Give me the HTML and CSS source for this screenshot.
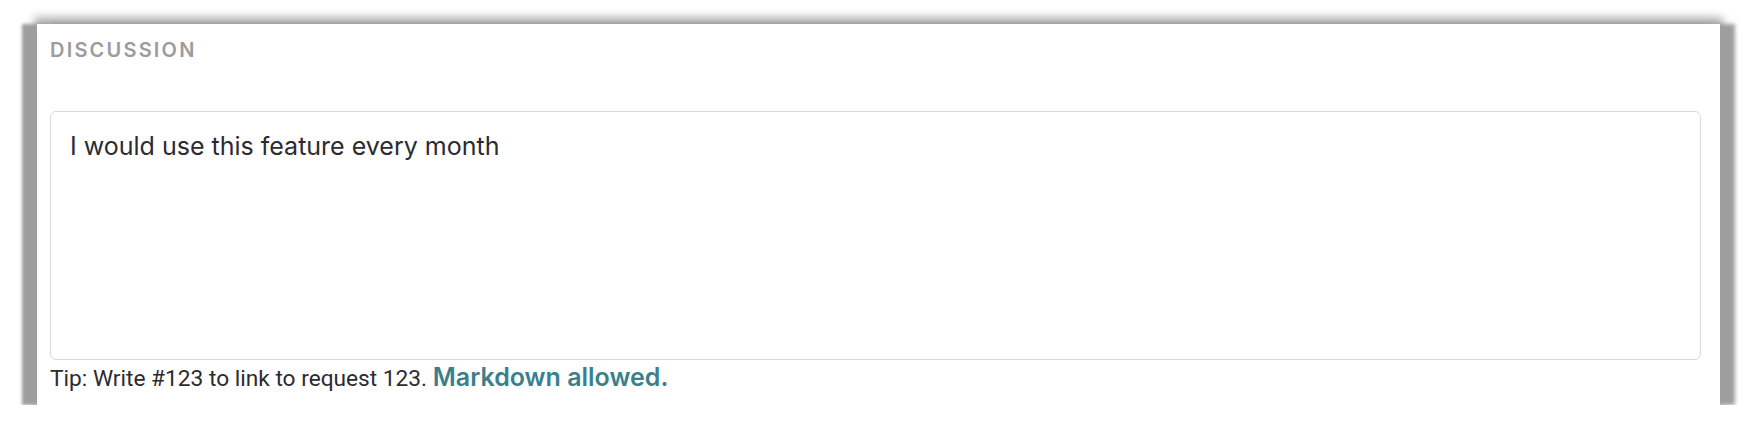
FILE: index.html
```html
<!DOCTYPE html>
<html lang="en">
<head>
  <meta charset="UTF-8" />
  <meta name="viewport" content="width=device-width, initial-scale=1.0" />
  <title>Discussion</title>
  <link rel="stylesheet" href="styles.css">
</head>
<body>
  <div class="card">
    <div class="label">Discussion</div>
    <div class="field">I would use this feature every month</div>
    <div class="tip">Tip: Write #123 to link to request 123. <span class="md">Markdown allowed.</span></div>
  </div>
</body>
</html>
```
FILE: styles.css
```css
body { margin: 0; background: #fff; font-family: Inter, "Noto Sans", sans-serif; }
.card { margin: 24px 44px 0 37px; height: 381px; box-sizing: border-box; background: #fff; padding: 14px 19px 0 13px;
  box-shadow: -15px 0 3px #9e9e9e, 15px 0 4px #9e9e9e, 0 -4px 8px 3px rgba(0,0,0,0.3), 0 3px 6px rgba(0,0,0,0.25); }
.label { font-size: 20px; font-weight: 600; letter-spacing: 2.2px; color: #9b9ba1; text-transform: uppercase; line-height: 24px; }
.field { margin-top: 49px; height: 249px; box-sizing: border-box; border: 1px solid #d9d8e3; border-radius: 6px; padding: 19px 19px; font-size: 25px; color: #2b2b30; line-height: 30px; }
.tip { font-family: Roboto, sans-serif; font-size: 22.7px; color: #2b2b30; margin-top: 3px; line-height: 28px; }
.md { font-family: Inter, sans-serif; font-weight: 600; color: #3b7f8d; font-size: 25px; }
```
